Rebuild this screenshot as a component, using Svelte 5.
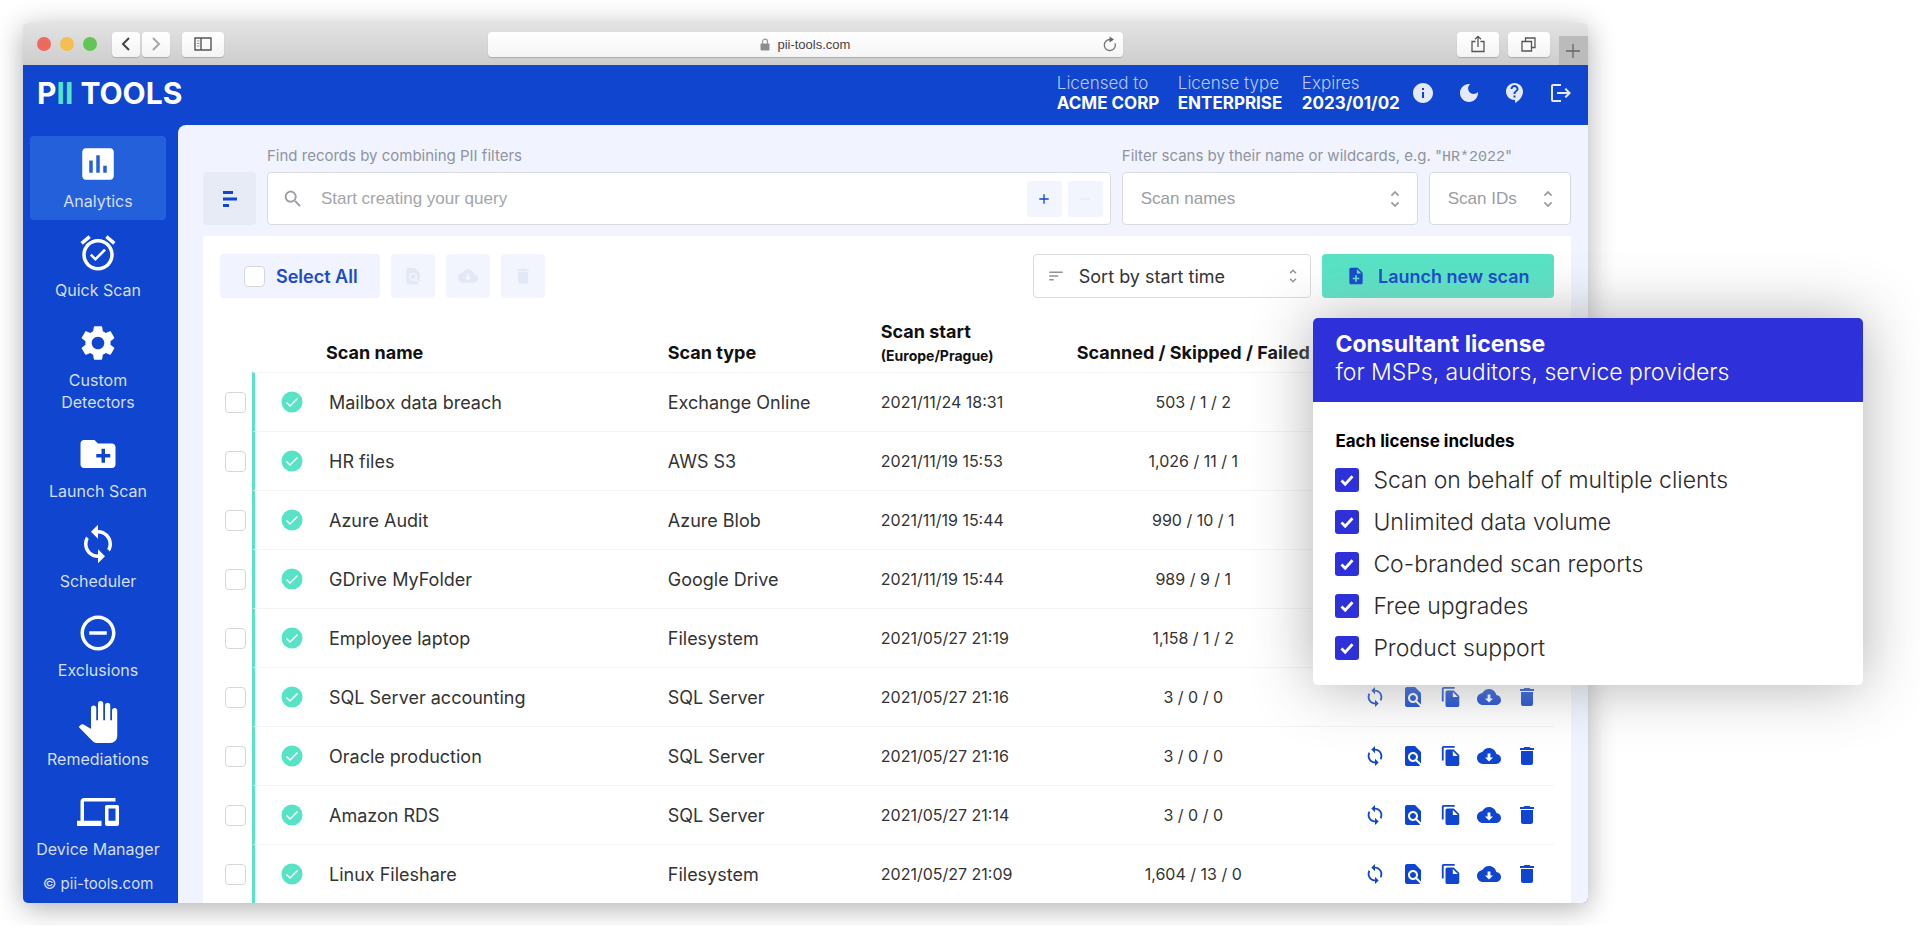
<script>
  const paths = {
    analytics: 'M19 3H5c-1.1 0-2 .9-2 2v14c0 1.1.9 2 2 2h14c1.1 0 2-.9 2-2V5c0-1.1-.9-2-2-2zM9 17H7v-7h2v7zm4 0h-2V7h2v10zm4 0h-2v-4h2v4z',
    alarm: 'M22 5.72l-4.6-3.86-1.29 1.53 4.6 3.86L22 5.72zM7.88 3.39L6.6 1.86 2 5.71l1.29 1.53 4.59-3.85zM12 4c-4.97 0-9 4.03-9 9s4.02 9 9 9c4.97 0 9-4.03 9-9s-4.03-9-9-9zm0 16c-3.87 0-7-3.13-7-7s3.13-7 7-7 7 3.13 7 7-3.13 7-7 7zm-1.46-5.47L8.41 12.4l-1.06 1.06 3.18 3.18 6-6-1.06-1.06-4.93 4.95z',
    gear: 'M19.14 12.94c.04-.3.06-.61.06-.94 0-.32-.02-.64-.07-.94l2.03-1.58c.18-.14.23-.41.12-.61l-1.92-3.32c-.12-.22-.37-.29-.59-.22l-2.39.96c-.5-.38-1.03-.7-1.62-.94l-.36-2.54c-.04-.24-.24-.41-.48-.41h-3.84c-.24 0-.43.17-.47.41l-.36 2.54c-.59.24-1.13.57-1.62.94l-2.39-.96c-.22-.08-.47 0-.59.22L2.74 8.87c-.12.21-.08.47.12.61l2.03 1.58c-.05.3-.09.63-.09.94s.02.64.07.94l-2.03 1.58c-.18.14-.23.41-.12.61l1.92 3.32c.12.22.37.29.59.22l2.39-.96c.5.38 1.03.7 1.62.94l.36 2.54c.05.24.24.41.48.41h3.84c.24 0 .44-.17.47-.41l.36-2.54c.59-.24 1.13-.56 1.62-.94l2.39.96c.22.08.47 0 .59-.22l1.92-3.32c.12-.22.07-.47-.12-.61l-2.01-1.58zM12 15.6c-1.98 0-3.6-1.62-3.6-3.6s1.62-3.6 3.6-3.6 3.6 1.62 3.6 3.6-1.62 3.6-3.6 3.6z',
    folder: 'M20 6h-8l-2-2H4c-1.11 0-1.99.89-1.99 2L2 18c0 1.11.89 2 2 2h16c1.11 0 2-.89 2-2V8c0-1.11-.89-2-2-2zm-1 8h-3v3h-2v-3h-3v-2h3V9h2v3h3v2z',
    sync: 'M12 4V1L8 5l4 4V6c3.31 0 6 2.69 6 6 0 1.01-.25 1.97-.7 2.8l1.46 1.46C19.54 15.03 20 13.57 20 12c0-4.42-3.58-8-8-8zm0 14c-3.31 0-6-2.69-6-6 0-1.01.25-1.97.7-2.8L5.24 7.74C4.46 8.97 4 10.43 4 12c0 4.42 3.58 8 8 8v3l4-4-4-4v3z',
    exclude: 'M7 11v2h10v-2H7zm5-9C6.48 2 2 6.48 2 12s4.48 10 10 10 10-4.48 10-10S17.52 2 12 2zm0 18c-4.41 0-8-3.59-8-8s3.59-8 8-8 8 3.59 8 8-3.59 8-8 8z',
    hand: 'M23 5.5V20c0 2.2-1.8 4-4 4h-7.3c-1.08 0-2.1-.43-2.85-1.19L1 14.83s1.26-1.23 1.3-1.25c.22-.19.49-.29.79-.29.22 0 .42.06.6.16.04.01 4.31 2.46 4.31 2.46V4c0-.83.67-1.5 1.5-1.5S11 3.17 11 4v7h1V1.5c0-.83.67-1.5 1.5-1.5S15 .67 15 1.5V11h1V2.5c0-.83.67-1.5 1.5-1.5s1.5.67 1.5 1.5V11h1V5.5c0-.83.67-1.5 1.5-1.5s1.5.67 1.5 1.5z',
    devices: 'M4 6h18V4H4c-1.1 0-2 .9-2 2v11H0v3h14v-3H4V6zm19 2h-6c-.55 0-1 .45-1 1v10c0 .55.45 1 1 1h6c.55 0 1-.45 1-1V9c0-.55-.45-1-1-1zm-1 9h-4v-7h4v7z',
    info: 'M12 2C6.48 2 2 6.48 2 12s4.48 10 10 10 10-4.48 10-10S17.52 2 12 2zm1 15h-2v-6h2v6zm0-8h-2V7h2v2z',
    moon: 'M12 3c-4.97 0-9 4.03-9 9s4.03 9 9 9 9-4.03 9-9c0-.46-.04-.92-.1-1.36-.98 1.37-2.58 2.26-4.4 2.26-2.98 0-5.4-2.42-5.4-5.4 0-1.81.89-3.42 2.26-4.4-.44-.06-.9-.1-1.36-.1z',
    help: 'M11.5 2C6.81 2 3 5.81 3 10.5S6.81 19 11.5 19h.5v3c4.86-2.34 8-7 8-11.5C20 5.81 16.19 2 11.5 2zm1 14.5h-2v-2h2v2zm0-3.5h-2c0-3.25 3-3 3-5 0-1.1-.9-2-2-2s-2 .9-2 2h-2c0-2.21 1.79-4 4-4s4 1.79 4 4c0 2.5-3 2.75-3 5z',
    logout: 'M17 7l-1.41 1.41L18.17 11H8v2h10.17l-2.58 2.58L17 17l5-5zM4 5h8V3H4c-1.1 0-2 .9-2 2v14c0 1.1.9 2 2 2h8v-2H4V5z',
    search: 'M15.5 14h-.79l-.28-.27C15.41 12.59 16 11.11 16 9.5 16 5.91 13.09 3 9.5 3S3 5.91 3 9.5 5.91 16 9.5 16c1.61 0 3.09-.59 4.23-1.57l.27.28v.79l5 4.99L20.49 19l-4.99-5zm-6 0C7.01 14 5 11.99 5 9.5S7.01 5 9.5 5 14 7.01 14 9.5 11.99 14 9.5 14z',
    unfold: 'M12 5.83L15.17 9l1.41-1.41L12 3 7.41 7.59 8.83 9 12 5.83zm0 12.34L8.83 15l-1.41 1.41L12 21l4.59-4.59L15.17 15 12 18.17z',
    sort: 'M3 18h6v-2H3v2zM3 6v2h18V6H3zm0 7h12v-2H3v2z',
    plus: 'M19 13h-6v6h-2v-6H5v-2h6V5h2v6h6v2z',
    minus: 'M19 13H5v-2h14v2z',
    bars: 'M5 4h10v3H5zM5 10.5h14v3H5zM5 17h6v3H5z',
    noteAdd: 'M14 2H6c-1.1 0-1.99.9-1.99 2L4 20c0 1.1.89 2 1.99 2H18c1.1 0 2-.9 2-2V8l-6-6zm2 14h-3v3h-2v-3H8v-2h3v-3h2v3h3v2zm-3-7V3.5L18.5 9H13z',
    find: 'M20 19.59V8l-6-6H6c-1.1 0-1.99.9-1.99 2L4 20c0 1.1.89 2 1.99 2H18c.45 0 .85-.15 1.19-.4l-4.43-4.43c-.8.52-1.74.83-2.76.83-2.76 0-5-2.24-5-5s2.24-5 5-5 5 2.24 5 5c0 1.02-.31 1.96-.83 2.75L20 19.59zM9 13c0 1.66 1.34 3 3 3s3-1.34 3-3-1.34-3-3-3-3 1.34-3 3z',
    copy: 'M16 1H4c-1.1 0-2 .9-2 2v14h2V3h12V1zm-1 4l6 6v10c0 1.1-.9 2-2 2H7.99C6.89 23 6 22.1 6 21l.01-14c0-1.1.89-2 1.99-2h7zm-1 7h5.5L14 6.5V12z',
    cloud: 'M19.35 10.04C18.67 6.59 15.64 4 12 4 9.11 4 6.6 5.64 5.35 8.04 2.34 8.36 0 10.91 0 14c0 3.31 2.69 6 6 6h13c2.76 0 5-2.24 5-5 0-2.64-2.05-4.78-4.65-4.96zM16 13.5l-4 4-4-4h2.6V9.5h2.8v4z',
    trash: 'M6 19c0 1.1.9 2 2 2h8c1.1 0 2-.9 2-2V7H6v12zM19 4h-3.5l-1-1h-5l-1 1H5v2h14V4z',
  };

  const nav = [
    { label: 'Analytics', icon: 'analytics', active: true },
    { label: 'Quick Scan', icon: 'alarm' },
    { label: 'Custom Detectors', icon: 'gear' },
    { label: 'Launch Scan', icon: 'folder' },
    { label: 'Scheduler', icon: 'sync' },
    { label: 'Exclusions', icon: 'exclude' },
    { label: 'Remediations', icon: 'hand' },
    { label: 'Device Manager', icon: 'devices' },
  ];

  const licence = [
    ['Licensed to', 'ACME CORP'],
    ['License type', 'ENTERPRISE'],
    ['Expires', '2023/01/02'],
  ];

  const scans = [
    ['Mailbox data breach', 'Exchange Online', '2021/11/24 18:31', '503 / 1 / 2'],
    ['HR files', 'AWS S3', '2021/11/19 15:53', '1,026 / 11 / 1'],
    ['Azure Audit', 'Azure Blob', '2021/11/19 15:44', '990 / 10 / 1'],
    ['GDrive MyFolder', 'Google Drive', '2021/11/19 15:44', '989 / 9 / 1'],
    ['Employee laptop', 'Filesystem', '2021/05/27 21:19', '1,158 / 1 / 2'],
    ['SQL Server accounting', 'SQL Server', '2021/05/27 21:16', '3 / 0 / 0'],
    ['Oracle production', 'SQL Server', '2021/05/27 21:16', '3 / 0 / 0'],
    ['Amazon RDS', 'SQL Server', '2021/05/27 21:14', '3 / 0 / 0'],
    ['Linux Fileshare', 'Filesystem', '2021/05/27 21:09', '1,604 / 13 / 0'],
  ];

  const actions = [
    ['sync', 'Rescan'],
    ['find', 'Inspect'],
    ['copy', 'Duplicate'],
    ['cloud', 'Download'],
    ['trash', 'Delete'],
  ];

  const perks = [
    'Scan on behalf of multiple clients',
    'Unlimited data volume',
    'Co-branded scan reports',
    'Free upgrades',
    'Product support',
  ];
</script>

{#snippet icon(name, size)}
  <svg width={size} height={size} viewBox="0 0 24 24" fill="currentColor" aria-hidden="true"><path d={paths[name]} /></svg>
{/snippet}

<div class="stage">
  <div class="window">
    <div class="chrome">
      <div class="chrome-side">
        <div class="lights"><i class="red"></i><i class="yellow"></i><i class="green"></i></div>
        <div class="history">
          <button class="key narrow" aria-label="Back">
            <svg width="12" height="16" viewBox="0 0 12 16" fill="none" stroke="#444" stroke-width="2"><path d="M9 2L3 8l6 6" /></svg>
          </button>
          <button class="key narrow" aria-label="Forward">
            <svg width="12" height="16" viewBox="0 0 12 16" fill="none" stroke="#a5a5a5" stroke-width="2"><path d="M3 2l6 6-6 6" /></svg>
          </button>
        </div>
        <button class="key" aria-label="Toggle sidebar">
          <svg width="18" height="14" viewBox="0 0 18 14" fill="none" stroke="#555"><path d="M1 1h16v12H1zM7 1v12" stroke-width="1.4" /><path d="M3 4h2.500M3 6.500h2.500M3 9h2.500" stroke-width="1" stroke="#999" /></svg>
        </button>
      </div>
      <div class="address">
        <svg width="10" height="13" viewBox="0 0 10 13"><rect x="0.500" y="5.500" width="9" height="7" rx="1" fill="#8d8d8d" /><path d="M2.500 6V3.600a2.500 2.500 0 015 0V6" fill="none" stroke="#999" stroke-width="1.200" /></svg>
        <span>pii-tools.com</span>
        <button class="reload" aria-label="Reload">
          <svg width="15" height="16" viewBox="0 0 15 16"><path d="M8 3.500a5.500 5.500 0 105 3.700" fill="none" stroke="#777" stroke-width="1.300" /><path d="M7.500 0.500l4.500 3-4.500 3z" fill="#666" /></svg>
        </button>
      </div>
      <div class="chrome-side end">
        <button class="key" aria-label="Share">
          <svg width="14" height="18" viewBox="0 0 14 18" fill="none" stroke="#555" stroke-width="1.300"><path d="M4.500 6.500H1v10h12v-10H9.500M7 12V1.500M4 4.300l3-3 3 3" /></svg>
        </button>
        <button class="key" aria-label="Tabs">
          <svg width="15" height="15" viewBox="0 0 15 15" fill="none" stroke="#555" stroke-width="1.300"><path d="M1 4.500h9.500V14H1zM4.500 4.500V1H14v9.500h-3.500" /></svg>
        </button>
        <button class="newtab" aria-label="New tab">
          <svg width="14" height="14" viewBox="0 0 14 14" stroke="#666" stroke-width="1.300"><path d="M7 0v14M0 7h14" /></svg>
        </button>
      </div>
    </div>

    <header class="topbar">
      <div class="logo">P<span>II</span> TOOLS</div>
      <dl>
        {#each licence as [term, value]}
          <div><dt>{term}</dt><dd>{value}</dd></div>
        {/each}
      </dl>
      <div class="tools">
        <button aria-label="About">{@render icon('info', 24)}</button>
        <button aria-label="Dark mode">{@render icon('moon', 24)}</button>
        <button aria-label="Help">{@render icon('help', 24)}</button>
        <button aria-label="Log out">{@render icon('logout', 24)}</button>
      </div>
    </header>

    <div class="body">
      <nav>
        {#each nav as item}
          <a href="#{item.icon}" class:active={item.active}>
            {@render icon(item.icon, 42)}
            <span>{item.label}</span>
          </a>
        {/each}
        <small>© pii-tools.com</small>
      </nav>

      <main>
        <div class="filters">
          <button class="builder" aria-label="Filter builder">{@render icon('bars', 24)}</button>
          <div class="group grow">
            <label for="query">Find records by combining PII filters</label>
            <div class="field query">
              {@render icon('search', 22)}
              <input id="query" type="text" placeholder="Start creating your query" />
              <button class="mini" aria-label="Add filter">{@render icon('plus', 16)}</button>
              <button class="mini off" aria-label="Remove filter" disabled>{@render icon('minus', 16)}</button>
            </div>
          </div>
          <div class="group">
            <label for="names">Filter scans by their name or wildcards, e.g. "<code>HR*2022</code>"</label>
            <div class="pair">
              <div class="field pick names">
                <select id="names"><option>Scan names</option></select>
                {@render icon('unfold', 22)}
              </div>
              <div class="field pick ids">
                <select aria-label="Scan IDs"><option>Scan IDs</option></select>
                {@render icon('unfold', 22)}
              </div>
            </div>
          </div>
        </div>

        <section class="panel">
          <div class="toolbar">
            <label class="select-all"><input class="box" type="checkbox" /> Select All</label>
            <button class="bulk" aria-label="Inspect selected" disabled>{@render icon('find', 20)}</button>
            <button class="bulk" aria-label="Download selected" disabled>{@render icon('cloud', 20)}</button>
            <button class="bulk" aria-label="Delete selected" disabled>{@render icon('trash', 20)}</button>
            <div class="field pick sort">
              {@render icon('sort', 18)}
              <select aria-label="Sort order"><option>Sort by start time</option></select>
              {@render icon('unfold', 18)}
            </div>
            <button class="launch">{@render icon('noteAdd', 20)} Launch new scan</button>
          </div>

          <table>
            <colgroup>
              <col class="c-check" /><col class="c-state" /><col /><col class="c-type" /><col class="c-start" /><col class="c-count" /><col class="c-act" />
            </colgroup>
            <thead>
              <tr>
                <td></td>
                <td></td>
                <th scope="col">Scan name</th>
                <th scope="col">Scan type</th>
                <th scope="col" class="two">Scan start<small>(Europe/Prague)</small></th>
                <th scope="col" class="mid">Scanned / Skipped / Failed</th>
                <td></td>
              </tr>
            </thead>
            <tbody>
              {#each scans as [name, type, start, counts]}
                <tr>
                  <td class="check"><input class="box" type="checkbox" aria-label="Select {name}" /></td>
                  <td class="state">
                    <svg width="22" height="22" viewBox="0 0 22 22" fill="none" role="img" aria-label="Finished"><circle cx="11" cy="11" r="10.500" fill="#57e3c5" /><path d="M5.500 11.500l3.500 3.500 7.500-7.500" stroke="#fff" stroke-width="1.500" /></svg>
                  </td>
                  <td class="inset">{name}</td>
                  <td>{type}</td>
                  <td class="num">{start}</td>
                  <td class="num mid">{counts}</td>
                  <td>
                    <div class="acts">
                      {#each actions as [glyph, title]}
                        <button aria-label="{title} {name}">{@render icon(glyph, glyph === 'sync' || glyph === 'copy' ? 22 : 24)}</button>
                      {/each}
                    </div>
                  </td>
                </tr>
              {/each}
            </tbody>
          </table>
        </section>
      </main>
    </div>
  </div>

  <aside class="offer">
    <h2><strong>Consultant license</strong><span>for MSPs, auditors, service providers</span></h2>
    <div class="offer-body">
      <h3>Each license includes</h3>
      <ul>
        {#each perks as perk}
          <li>
            <svg width="24" height="24" viewBox="0 0 24 24" fill="none" aria-hidden="true"><rect width="24" height="24" rx="3" fill="#2e30d9" /><path d="M6.500 12.500l3.700 3.700 7.300-8" stroke="#fff" stroke-width="2.800" /></svg>
            {perk}
          </li>
        {/each}
      </ul>
    </div>
  </aside>
</div>

<style>
  :global(body) { margin: 0; background: #fff; }
  * { box-sizing: border-box; }
  svg { display: block; flex: none; }
  button { font: inherit; color: inherit; border: 0; padding: 0; background: none; display: flex; align-items: center; justify-content: center; cursor: pointer; }
  input, select { font: inherit; color: inherit; }

  .stage { position: relative; padding: 23px 23px 22px; font-family: 'Inter', sans-serif; font-size: 18px; color: #333; overflow: hidden; }
  .window { width: 83.5%; min-height: calc(100vh - 46px); display: flex; flex-direction: column; border-radius: 5px; overflow: hidden; box-shadow: 0 5px 28px rgba(0, 0, 0, 0.32); }

  .chrome { display: grid; grid-template-columns: 1fr 635px 1fr; height: 42px; background: linear-gradient(#e3e3e3, #cdcdcd); }
  .chrome-side { display: flex; align-items: center; padding-left: 14px; gap: 12px; }
  .lights { display: flex; gap: 9px; margin-right: 3px; }
  .lights i { width: 14px; height: 14px; border-radius: 50%; }
  .red { background: #ec695e; }
  .yellow { background: #f4be50; }
  .green { background: #62c655; }
  .history { display: flex; gap: 2px; }
  .key { width: 42px; height: 25px; background: linear-gradient(#fff, #f4f4f4); border-radius: 4px; box-shadow: 0 1px 1px rgba(0, 0, 0, 0.18); }
  .key.narrow { width: 28px; }
  .end { justify-content: flex-end; padding: 0; gap: 9px; }
  .newtab { width: 29px; height: 29px; background: #bbb; align-self: flex-end; }
  .address { display: flex; align-items: center; justify-content: center; gap: 7px; height: 25px; align-self: center; background: linear-gradient(#fff, #f5f5f5); border-radius: 4px; box-shadow: 0 1px 1px rgba(0, 0, 0, 0.18); font: 13px 'Liberation Sans', sans-serif; color: #444; position: relative; }
  .reload { position: absolute; right: 6px; }

  .topbar { height: 60px; display: flex; align-items: center; background: #0f45cf; color: #fff; padding: 0 15px 4px 14px; }
  .logo { font-size: 30px; font-weight: 700; margin-right: auto; }
  .logo span { color: #57e3c5; }
  dl { display: grid; grid-template-columns: 107px 110px 92px; gap: 14px; margin: 0; font-size: 17px; line-height: 20px; white-space: nowrap; }
  dt { font-weight: 300; color: #b9c9f5; }
  dd { margin: 0; font-weight: 700; }
  .tools { display: flex; gap: 22px; margin-left: 17px; color: #e4eafb; }

  .body { flex: 1; display: flex; background: #0f45cf; }
  nav { width: 155px; display: flex; flex-direction: column; justify-content: space-between; padding: 11px 12px 8px 7px; color: #d5dffa; font-size: 16px; line-height: 22px; text-align: center; }
  nav a { display: flex; flex-direction: column; align-items: center; gap: 5px; padding: 7px 6px 8px; color: inherit; text-decoration: none; border-radius: 4px; }
  nav a svg { color: #fff; }
  nav .active { background: #2560db; }
  nav small { font-size: 15px; }

  main { flex: 1; min-width: 0; display: flex; flex-direction: column; padding: 20px 17px 0 25px; background: #f1f4ff; border-top-left-radius: 8px; }
  .filters { display: flex; align-items: flex-end; gap: 11px; padding-bottom: 11px; color: #8f939c; }
  .builder { width: 53px; height: 53px; background: #e7ebf6; border-radius: 4px; color: #0f45cf; }
  .group { display: flex; flex-direction: column; gap: 5px; }
  .grow { flex: 1; }
  .group label { height: 22px; font-size: 15px; line-height: 22px; white-space: nowrap; }
  code { font-family: 'Liberation Mono', monospace; font-size: 15px; line-height: 1; }
  .pair { display: flex; gap: 11px; }
  .field { display: flex; align-items: center; height: 53px; background: #fff; border: 1px solid #d9dbe1; border-radius: 4px; font-family: 'Liberation Sans', sans-serif; font-size: 17px; color: #9a9da3; }
  .field input, .field select { flex: 1; min-width: 0; border: 0; outline: 0; background: none; padding: 0; appearance: none; }
  .field input::placeholder { color: #a3a6ab; opacity: 1; }
  .query { padding: 0 7px 0 14px; gap: 6px; }
  .query input { margin-left: 11px; }
  .mini { width: 35px; height: 36px; background: #f2f5fe; border-radius: 3px; color: #0f45cf; }
  .off { color: #e6eaf6; }
  .pick { padding: 0 11px 0 18px; }
  .names { width: 296px; }
  .ids { width: 142px; }

  .panel { flex: 1; background: #fff; padding: 18px 17px 0; }
  .toolbar { display: flex; gap: 11px; height: 44px; }
  .select-all { display: flex; align-items: center; gap: 11px; width: 160px; padding-left: 24px; background: #f1f4fe; border-radius: 4px; color: #1c4bcc; font-weight: 600; white-space: nowrap; }
  .box { appearance: none; width: 21px; height: 21px; margin: 0; flex: none; background: #fff; border: 1px solid #d5d7dc; border-radius: 4px; }
  .bulk { width: 44px; background: #f2f5fe; border-radius: 4px; color: #e3e8f6; }
  .sort { width: 278px; height: 44px; margin-left: auto; padding: 0 8px 0 13px; font-family: 'Inter', sans-serif; font-size: 18px; color: #8f9299; }
  .sort select { margin-left: 14px; color: #333; }
  .launch { width: 232px; gap: 12px; background: #57e3c5; border-radius: 4px; color: #1346cd; font-weight: 600; white-space: nowrap; }

  table { width: 100%; table-layout: fixed; border-collapse: separate; border-spacing: 0; }
  .c-check { width: 32px; }
  .c-state { width: 74px; }
  .c-type { width: 213px; }
  .c-start { width: 195px; }
  .c-count { width: 235px; }
  .c-act { width: 243px; }
  th, td { padding: 0; text-align: left; white-space: nowrap; }
  thead tr { height: 74px; }
  th { vertical-align: bottom; padding-bottom: 7px; font-weight: 700; font-size: 18px; line-height: 24px; color: #111; }
  th small { display: block; font-size: 14px; line-height: 24px; }
  th.two { padding-bottom: 4px; }
  tbody tr { height: 59px; }
  tbody td { border-top: 1px solid #f3f3f5; }
  tbody td.check { border-top-color: transparent; padding-left: 5px; }
  .check .box { display: block; }
  .state { border-left: 3px solid #57e3c5; }
  .state svg { margin-left: 26px; }
  td.inset { padding-left: 3px; }
  td.num { font-size: 16px; }
  th.mid, td.mid { text-align: center; }
  .acts { display: flex; justify-content: flex-end; gap: 14px; padding-right: 15px; color: #0f45cf; }
  .acts button { width: 24px; height: 24px; }

  .offer { position: absolute; top: 318px; right: 2.95%; width: 550px; background: #fff; border-radius: 5px; overflow: hidden; box-shadow: 0 0 60px rgba(162, 162, 162, 0.85); color: #2b2b2b; }
  .offer h2 { margin: 0; height: 84px; padding: 12px 22px; background: #2e30d9; color: #fff; font-size: 23px; line-height: 28px; font-weight: 300; }
  .offer h2 > * { display: block; }
  .offer strong { font-weight: 700; }
  .offer-body { padding: 28px 22px 16px; }
  h3 { margin: 0; font-size: 17px; line-height: 22px; font-weight: 700; color: #000; }
  ul { list-style: none; margin: 7px 0 0; padding: 0; }
  li { display: flex; align-items: center; gap: 14px; height: 42px; font-size: 23px; font-weight: 300; }
</style>
